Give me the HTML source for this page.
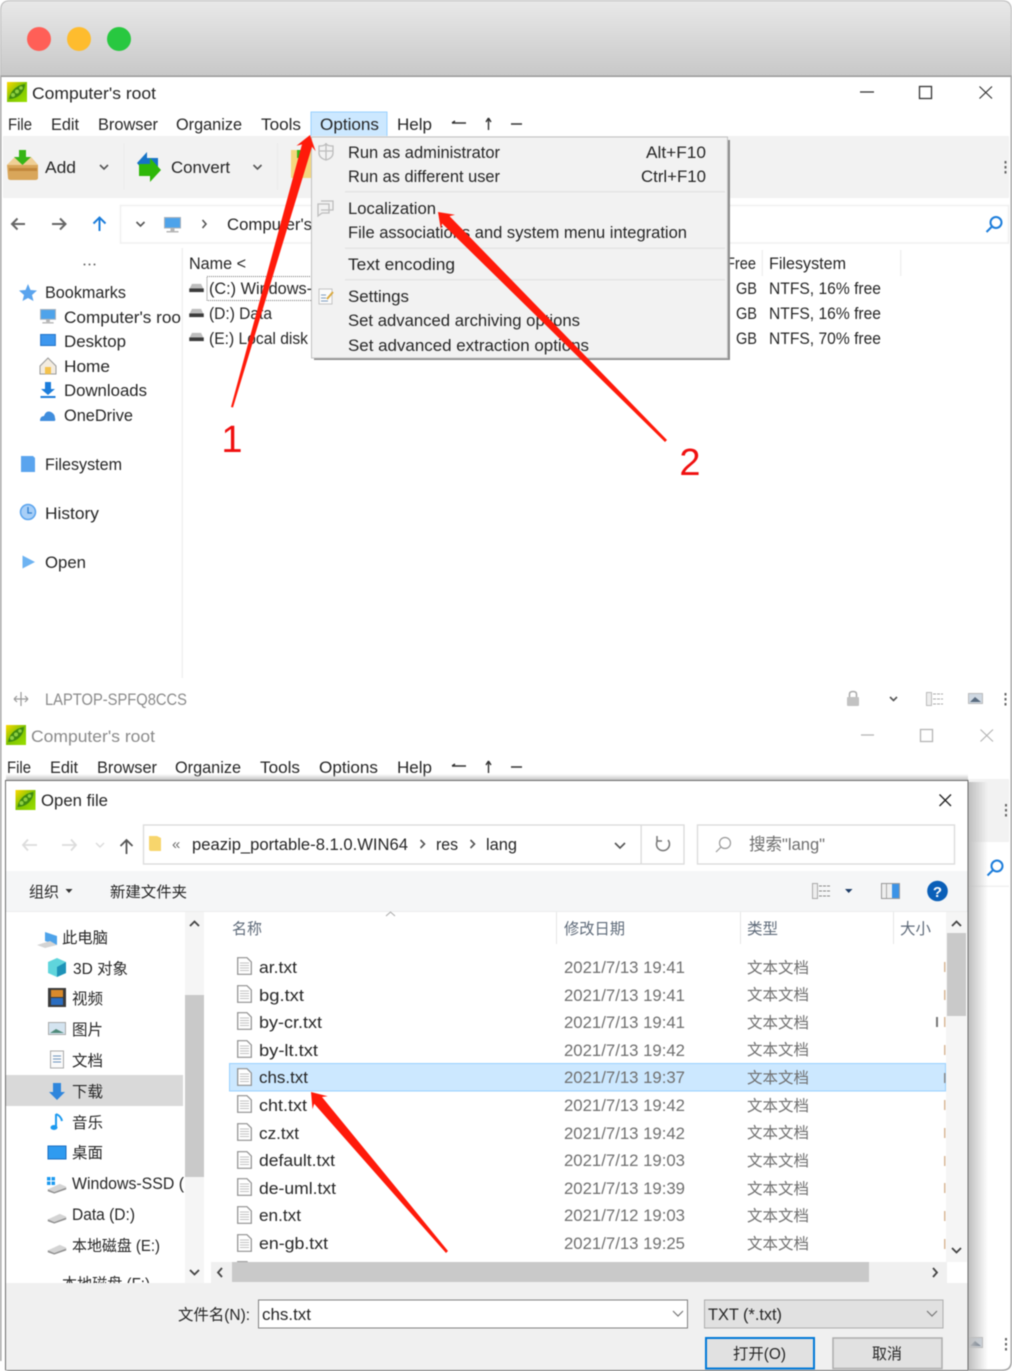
<!DOCTYPE html>
<html lang="en"><head><meta charset="utf-8"><title>PeaZip</title>
<style>
html,body{margin:0;padding:0;background:#fff;width:1012px;height:1371px;overflow:hidden}
svg{display:block;filter:blur(.4px)}
text{font-family:"Liberation Sans","Noto Sans CJK SC",sans-serif;font-size:17px;fill:#262626}
.g{fill:#8a8a8a}
.m{fill:#6f6f6f}.h{fill:#5f6b7a}
.ln{fill:none;stroke:#555;stroke-width:1.6}
</style></head><body>
<svg xmlns="http://www.w3.org/2000/svg" width="1012" height="1371" viewBox="0 0 1012 1371">
<defs>
<linearGradient id="tb" x1="0" y1="0" x2="0" y2="1"><stop offset="0" stop-color="#e9e9e9"/><stop offset="1" stop-color="#c8c8c8"/></linearGradient>
<linearGradient id="sh" x1="0" y1="0" x2="1" y2="0"><stop offset="0" stop-color="#bdbdbd"/><stop offset="1" stop-color="#bdbdbd" stop-opacity="0"/></linearGradient>
<linearGradient id="sh2" x1="0" y1="1" x2="0" y2="0"><stop offset="0" stop-color="#c4c4c4"/><stop offset="1" stop-color="#c4c4c4" stop-opacity="0"/></linearGradient>
<linearGradient id="pea" x1="0" y1="0" x2="1" y2="1"><stop offset="0" stop-color="#ffd800"/><stop offset=".5" stop-color="#7fc400"/><stop offset="1" stop-color="#9ae000"/></linearGradient>
<symbol id="logo" viewBox="0 0 20 20" overflow="visible"><rect width="20" height="20" fill="url(#pea)"/><path d="M2 17C3 9 10 3 18 2 18 10 11 17 2 17Z" fill="#3f8a10"/><circle cx="6" cy="13" r="2" fill="#8fd040"/><circle cx="10" cy="9.500" r="2" fill="#8fd040"/><circle cx="14" cy="6" r="1.800" fill="#8fd040"/></symbol>
<symbol id="doc" viewBox="0 0 15 18" overflow="visible"><path d="M.7.7H10L14.300 5V17.300H.7Z" fill="#fff" stroke="#8e8e8e" stroke-width="1.200"/><path d="M3 6H12M3 8.500H12M3 11H12M3 13.500H12" stroke="#c2c2c2"/></symbol>
<symbol id="drive" viewBox="0 0 16 11" overflow="visible"><path d="M3 1H13L15.500 6H.5Z" fill="#bdbdbd"/><rect x="0" y="6" width="16" height="4" fill="#3b3b3b"/></symbol>
<symbol id="drive2" viewBox="0 0 20 12" overflow="visible"><path d="M0 7L13 1 20 4V7L7 11.500 0 9Z" fill="#d4d4d4"/><path d="M0 7L7 10 20 5V7L7 11.500 0 9Z" fill="#8f8f8f"/></symbol>
<symbol id="mon" viewBox="0 0 17 16" overflow="visible"><rect x=".5" y=".5" width="16" height="10.500" fill="#4ea3ea" stroke="#aab2ba"/><rect x="6.500" y="11" width="4" height="3" fill="#b5b5b5"/><rect x="2.500" y="14" width="12" height="1.500" fill="#b5b5b5"/></symbol>
<symbol id="desk" viewBox="0 0 17 13" overflow="visible"><rect x=".5" y=".5" width="16" height="12" fill="#3d97ee" stroke="#1e6fc4"/></symbol>
</defs>

<!-- Frame -->
<rect x="0" y="0" width="1012" height="1371" fill="#fff"/>
<path d="M0 76V10Q0 0 10 0H1002Q1012 0 1012 10V76Z" fill="url(#tb)"/>
<path d="M.7 76V10Q.7 .7 10 .7H1002Q1011.300 .7 1011.300 10V76" fill="none" stroke="#bdbdbd"/>
<rect x="0" y="75.500" width="1012" height="1.500" fill="#9a9a9a"/>
<rect x="0" y="76" width="1.500" height="1285" fill="#a5a5a5"/>
<rect x="1010.500" y="76" width="1.500" height="1285" fill="#a5a5a5"/>
<circle cx="39" cy="39" r="12" fill="#ff5f57"/><circle cx="79" cy="39" r="12" fill="#febc2e"/><circle cx="119" cy="39" r="12" fill="#28c840"/>

<!-- First window -->
<use href="#logo" x="7" y="82" width="20" height="20"/>
<text x="32" y="99" textLength="124" lengthAdjust="spacingAndGlyphs">Computer's root</text>
<path d="M860 92H874" stroke="#333" stroke-width="1.300"/><rect x="919.500" y="86.500" width="12" height="12" fill="none" stroke="#333" stroke-width="1.300"/><path d="M979.500 86.500L992 98.500M992 86.500L979.500 98.500" stroke="#333" stroke-width="1.200"/>
<rect x="311" y="112" width="76" height="24.500" fill="#cce8ff" stroke="#99d1ff"/>
<g>
<text x="8" y="130" textLength="24" lengthAdjust="spacingAndGlyphs">File</text>
<text x="51" y="130" textLength="28" lengthAdjust="spacingAndGlyphs">Edit</text>
<text x="98" y="130" textLength="60" lengthAdjust="spacingAndGlyphs">Browser</text>
<text x="176" y="130" textLength="66" lengthAdjust="spacingAndGlyphs">Organize</text>
<text x="261" y="130" textLength="40" lengthAdjust="spacingAndGlyphs">Tools</text>
<text x="320" y="130" textLength="59" lengthAdjust="spacingAndGlyphs">Options</text>
<text x="397" y="130" textLength="35" lengthAdjust="spacingAndGlyphs">Help</text>
</g>
<path d="M452 123H466M452 123L455 121M488.500 130V118M488.500 118L486 122M488.500 118L491 122M511 124H522" fill="none" stroke="#333" stroke-width="1.400"/>

<!-- toolbar -->
<rect x="3" y="136" width="1006" height="62" fill="#f2f2f2"/>
<rect x="123.500" y="143" width="1" height="47" fill="#ebebeb"/><rect x="277" y="143" width="1" height="47" fill="#ebebeb"/>
<path d="M7 165L15 157H31L38 165V178Q38 180 35 180H11Q8 180 8 178Z" fill="#d9a65a"/><path d="M7 165L15 157H31L38 165Z" fill="#efcf95"/><rect x="9" y="168" width="28" height="3" fill="#c2873b"/><path d="M19 150H26V157H31L22.500 165 14 157H19Z" fill="#35b516"/>
<text x="45" y="173" textLength="31" lengthAdjust="spacingAndGlyphs">Add</text>
<path class="ln" d="M100 165L104 169 108 165M253.500 165L257.500 169 261.500 165"/>
<path d="M137 163L147 152V158H158V170H147V175Z" fill="#1673c7"/><path d="M161 170L150 182V176H139V164H150V158Z" fill="#2fb809"/>
<text x="171" y="173" textLength="59" lengthAdjust="spacingAndGlyphs">Convert</text>
<rect x="291" y="150" width="20" height="28" fill="#f5d77d"/><rect x="297" y="150" width="7" height="8" fill="#35b516"/>
<rect x="1004.500" y="161" width="2" height="2.500" fill="#666"/><rect x="1004.500" y="166" width="2" height="2.500" fill="#666"/><rect x="1004.500" y="171" width="2" height="2.500" fill="#666"/>

<!-- nav -->
<rect x="120.500" y="205.500" width="888" height="37.500" fill="#fff" stroke="#f0f0f0" stroke-width="1.500"/>
<path d="M25 224H12M17.500 218.500L12 224 17.500 229.500M52 224H65.500M60 218.500L65.500 224 60 229.500" fill="none" stroke="#666" stroke-width="2"/>
<path d="M99.500 231V218M93.500 223.500L99.500 217.500 105.500 223.500" fill="none" stroke="#1c7ddb" stroke-width="2"/>
<path class="ln" d="M136.500 222L140.500 226 144.500 222M202.500 220L206 224 202.500 228"/>
<use href="#mon" x="164" y="217" width="17" height="16"/>
<text x="227" y="230" textLength="85" lengthAdjust="spacingAndGlyphs">Computer's</text>
<g fill="none" stroke="#1c7ddb" stroke-width="2"><circle cx="996" cy="222.500" r="5.500"/><path d="M991.500 227L986.500 232"/></g>

<!-- sidebar -->
<rect x="181.500" y="248" width="1.500" height="430" fill="#f0f0f0"/>
<circle cx="84.500" cy="264.500" r="1" fill="#666"/><circle cx="89.500" cy="264.500" r="1" fill="#666"/><circle cx="94.500" cy="264.500" r="1" fill="#666"/>
<path d="M28 284L30.500 290 37 290.500 32 295 33.500 301 28 298 22.500 301 24 295 19 290.500 25.500 290Z" fill="#5aa4ee"/>
<text x="45" y="298" textLength="81" lengthAdjust="spacingAndGlyphs">Bookmarks</text>
<use href="#mon" x="40" y="309" width="16" height="15"/>
<text x="64" y="323" textLength="117" lengthAdjust="spacingAndGlyphs">Computer's roo</text>
<use href="#desk" x="40" y="334" width="16" height="12"/>
<text x="64" y="347" textLength="62" lengthAdjust="spacingAndGlyphs">Desktop</text>
<path d="M40 366L48 358 56 366V374H40Z" fill="#f3ece0" stroke="#9a9a9a"/><rect x="45" y="367" width="6" height="7" fill="#f4c24c"/>
<text x="64" y="372" textLength="46" lengthAdjust="spacingAndGlyphs">Home</text>
<path d="M45 382H51V389H55L48 395 41 389H45Z" fill="#1c7ddb"/><rect x="40.500" y="396" width="15" height="2" fill="#1c7ddb"/>
<text x="64" y="396" textLength="83" lengthAdjust="spacingAndGlyphs">Downloads</text>
<path d="M40 421Q40 416 44 416 46 410 51 412 55 414 55 418 56 421 54 421Z" fill="#3f8ddd"/>
<text x="64" y="421" textLength="69" lengthAdjust="spacingAndGlyphs">OneDrive</text>
<path d="M21 456H33L35 458V472H21Z" fill="#5aa4ee"/>
<text x="45" y="470" textLength="77" lengthAdjust="spacingAndGlyphs">Filesystem</text>
<circle cx="28" cy="512" r="7.500" fill="#a8cff7" stroke="#5aa4ee" stroke-width="1.500"/><path d="M28 507V513H32" fill="none" stroke="#2f7fd0" stroke-width="1.300"/>
<text x="45" y="519" textLength="54" lengthAdjust="spacingAndGlyphs">History</text>
<path d="M22.500 555.500L35 562 22.500 568.500Z" fill="#6db3f2"/>
<text x="45" y="568" textLength="41" lengthAdjust="spacingAndGlyphs">Open</text>

<!-- file list -->
<text x="189" y="269" textLength="57" lengthAdjust="spacingAndGlyphs">Name &lt;</text>
<rect x="761.500" y="250" width="1.500" height="26" fill="#f0f0f0"/><rect x="900" y="250" width="1.500" height="26" fill="#f0f0f0"/>
<text x="726" y="269" textLength="30" lengthAdjust="spacingAndGlyphs">Free</text>
<text x="769" y="269" textLength="77" lengthAdjust="spacingAndGlyphs">Filesystem</text>
<rect x="207" y="276.500" width="105" height="24" fill="none" stroke="#777" stroke-dasharray="1 1"/>
<use href="#drive" x="188.500" y="283" width="16" height="10"/><use href="#drive" x="188.500" y="308" width="16" height="10"/><use href="#drive" x="188.500" y="332" width="16" height="10"/>
<text x="209" y="294" textLength="103" lengthAdjust="spacingAndGlyphs">(C:) Windows-</text>
<text x="209" y="319" textLength="63" lengthAdjust="spacingAndGlyphs">(D:) Data</text>
<text x="209" y="344" textLength="99" lengthAdjust="spacingAndGlyphs">(E:) Local disk</text>
<text x="736" y="294" textLength="21" lengthAdjust="spacingAndGlyphs">GB</text><text x="736" y="319" textLength="21" lengthAdjust="spacingAndGlyphs">GB</text><text x="736" y="344" textLength="21" lengthAdjust="spacingAndGlyphs">GB</text>
<text x="769" y="294" textLength="112" lengthAdjust="spacingAndGlyphs">NTFS, 16% free</text>
<text x="769" y="319" textLength="112" lengthAdjust="spacingAndGlyphs">NTFS, 16% free</text>
<text x="769" y="344" textLength="112" lengthAdjust="spacingAndGlyphs">NTFS, 70% free</text>

<!-- dropdown menu -->
<rect x="314" y="140" width="416" height="220" fill="#8e8e8e"/>
<rect x="311.500" y="137" width="416" height="221" fill="#f2f2f2" stroke="#c2c2c2"/>
<rect x="345" y="191" width="380" height="1.500" fill="#e4e4e4"/><rect x="345" y="247.500" width="380" height="1.500" fill="#e4e4e4"/><rect x="345" y="279" width="380" height="1.500" fill="#e4e4e4"/>
<g fill="none" stroke="#bdbdbd" stroke-width="1.300"><path d="M319 146Q326 146 326 143 326 146 333 146V153Q333 158 326 160 319 158 319 153ZM326 144V160M319 151H333"/><path d="M321 201H333V210H321M318 204H329V213H322L318 216Z"/></g>
<rect x="319" y="289" width="13" height="15" fill="#fbfbfb" stroke="#c4c4c4"/><path d="M321 295H326M321 298H326M321 301H328" stroke="#7f9fc0"/><path d="M327 299L333 292" stroke="#d9a93f" stroke-width="2"/>
<text x="348" y="158" textLength="152" lengthAdjust="spacingAndGlyphs">Run as administrator</text>
<text x="348" y="182" textLength="152" lengthAdjust="spacingAndGlyphs">Run as different user</text>
<text x="646" y="158" textLength="60" lengthAdjust="spacingAndGlyphs">Alt+F10</text>
<text x="641" y="182" textLength="65" lengthAdjust="spacingAndGlyphs">Ctrl+F10</text>
<text x="348" y="214" textLength="88" lengthAdjust="spacingAndGlyphs">Localization</text>
<text x="348" y="238" textLength="339" lengthAdjust="spacingAndGlyphs">File associations and system menu integration</text>
<text x="348" y="270" textLength="107" lengthAdjust="spacingAndGlyphs">Text encoding</text>
<text x="348" y="302" textLength="61" lengthAdjust="spacingAndGlyphs">Settings</text>
<text x="348" y="326" textLength="232" lengthAdjust="spacingAndGlyphs">Set advanced archiving options</text>
<text x="348" y="351" textLength="241" lengthAdjust="spacingAndGlyphs">Set advanced extraction options</text>

<!-- status bar -->
<path d="M21 692V706M14 699H28M14 699L17 696M14 699L17 702M28 699L25 696M28 699L25 702" fill="none" stroke="#999" stroke-width="1.200"/>
<text x="45" y="705" class="g" textLength="142" lengthAdjust="spacingAndGlyphs">LAPTOP-SPFQ8CCS</text>
<rect x="847" y="697" width="12" height="9" rx="1" fill="#c2c2c2"/><path d="M849.500 697V694Q849.500 691.500 853 691.500 856.500 691.500 856.500 694V697" fill="none" stroke="#aaa" stroke-width="1.500"/>
<path class="ln" d="M890 697L893.500 700.500 897 697"/>
<rect x="926.500" y="692.500" width="5" height="13" fill="#eee" stroke="#bbb"/><path d="M933 694H943M933 699H943M933 704H943" stroke="#aaa" stroke-dasharray="3 1"/>
<rect x="968.500" y="693.500" width="14" height="10" fill="#cfd8e2" stroke="#bbb"/><path d="M970 702L975 697 981 702Z" fill="#5a6c80"/>
<rect x="1004.500" y="693" width="2" height="2.500" fill="#666"/><rect x="1004.500" y="698" width="2" height="2.500" fill="#666"/><rect x="1004.500" y="703" width="2" height="2.500" fill="#666"/>

<!-- second window -->
<use href="#logo" x="6" y="725" width="20" height="20"/>
<text x="31" y="742" class="g" textLength="124" lengthAdjust="spacingAndGlyphs">Computer's root</text>
<path d="M861 735H874" stroke="#b5b5b5" stroke-width="1.300"/><rect x="920.500" y="729.500" width="12" height="12" fill="none" stroke="#b5b5b5" stroke-width="1.300"/><path d="M980.500 729.500L993 741.500M993 729.500L980.500 741.500" stroke="#b5b5b5" stroke-width="1.200"/>
<text x="7" y="773" textLength="24" lengthAdjust="spacingAndGlyphs">File</text>
<text x="50" y="773" textLength="28" lengthAdjust="spacingAndGlyphs">Edit</text>
<text x="97" y="773" textLength="60" lengthAdjust="spacingAndGlyphs">Browser</text>
<text x="175" y="773" textLength="66" lengthAdjust="spacingAndGlyphs">Organize</text>
<text x="260" y="773" textLength="40" lengthAdjust="spacingAndGlyphs">Tools</text>
<text x="319" y="773" textLength="59" lengthAdjust="spacingAndGlyphs">Options</text>
<text x="397" y="773" textLength="35" lengthAdjust="spacingAndGlyphs">Help</text>
<path d="M452 766H466M452 766L455 764M488.500 773V761M488.500 761L486 765M488.500 761L491 765M511 767H522" fill="none" stroke="#333" stroke-width="1.400"/>
<rect x="968" y="779" width="41" height="63" fill="#f2f2f2"/>
<rect x="968" y="848" width="41" height="38" fill="#fff"/><rect x="968" y="885.500" width="41" height="1.500" fill="#f0f0f0"/>
<g fill="none" stroke="#1c7ddb" stroke-width="2"><circle cx="997" cy="866" r="5.500"/><path d="M992.500 870.500L987.500 875.500"/></g>
<rect x="1005" y="804" width="2" height="2.500" fill="#666"/><rect x="1005" y="809" width="2" height="2.500" fill="#666"/><rect x="1005" y="814" width="2" height="2.500" fill="#666"/>
<rect x="968.500" y="1337.500" width="14" height="10" fill="#cfd8e2" stroke="#bbb"/><path d="M970 1346L975 1341 981 1346Z" fill="#5a6c80"/>
<rect x="1005" y="1338" width="2" height="2.500" fill="#666"/><rect x="1005" y="1343" width="2" height="2.500" fill="#666"/><rect x="1005" y="1348" width="2" height="2.500" fill="#666"/>
<rect x="968" y="782" width="20" height="588" fill="url(#sh)"/>
<rect x="6" y="774" width="962" height="6" fill="url(#sh2)"/>

<!-- dialog -->
<rect x="5.500" y="780.500" width="962.500" height="590" fill="#fff" stroke="#6b6b6b"/>
<use href="#logo" x="15" y="790" width="21" height="20"/>
<text x="41" y="806" textLength="67" lengthAdjust="spacingAndGlyphs">Open file</text>
<path d="M939.500 794.500L951 806M951 794.500L939.500 806" stroke="#222" stroke-width="1.300"/>
<path d="M37 845H23M28 839.500L23 845 28 850.500M62 845H76M71 839.500L76 845 71 850.500" fill="none" stroke="#dcdcdc" stroke-width="1.800"/>
<path d="M96 843L100 847 104 843" fill="none" stroke="#dcdcdc" stroke-width="1.500"/>
<path d="M126.500 854V841M120.500 846L126.500 840 132.500 846" fill="none" stroke="#555" stroke-width="1.800"/>
<rect x="143.500" y="825" width="540.500" height="39" fill="#fff" stroke="#dadada" stroke-width="1.300"/><rect x="640.500" y="825" width="1.300" height="39" fill="#dadada"/>
<path d="M149 836H157L161 838V851H151Q149 851 149 849Z" fill="#f7d56c"/>
<text x="172" y="849" class="m" style="font-size:15px">«</text>
<text x="192" y="850" textLength="216" lengthAdjust="spacingAndGlyphs">peazip_portable-8.1.0.WIN64</text>
<path class="ln" d="M420.500 840L424.500 844 420.500 848M470.500 840L474.500 844 470.500 848"/>
<text x="436" y="850" textLength="22" lengthAdjust="spacingAndGlyphs">res</text>
<text x="486" y="850" textLength="31" lengthAdjust="spacingAndGlyphs">lang</text>
<path class="ln" d="M615 843L620 848 625 843"/>
<path d="M668 840A6.500 6.500 0 1 1 658 840M657 836V841H662" fill="none" stroke="#777" stroke-width="1.500"/>
<rect x="697.500" y="825" width="257" height="39" fill="#fff" stroke="#dadada" stroke-width="1.300"/>
<g fill="none" stroke="#999" stroke-width="1.200"><circle cx="725" cy="843" r="5.500"/><path d="M721 847L716 852"/></g>
<text x="749" y="850" class="m" textLength="76" lengthAdjust="spacingAndGlyphs">搜索"lang"</text>
<rect x="6" y="871" width="961.500" height="40" fill="#f5f6f7"/><rect x="6" y="911" width="961.500" height="1" fill="#eceded"/>
<text x="29" y="897" style="font-size:15px" fill="#444" textLength="30" lengthAdjust="spacingAndGlyphs">组织</text>
<path d="M65.500 889H72.500L69 893Z" fill="#333"/>
<text x="110" y="897" style="font-size:15px" textLength="77" lengthAdjust="spacingAndGlyphs">新建文件夹</text>
<rect x="812.500" y="883.500" width="5" height="15" fill="#eee" stroke="#aaa"/><path d="M819 886H831M819 891H831M819 896H831" stroke="#888" stroke-dasharray="3 1"/>
<path d="M845 889H852.500L848.700 893Z" fill="#1d3c66"/>
<rect x="881.500" y="883.500" width="18" height="15" fill="#eee" stroke="#999"/><rect x="892" y="884" width="7" height="14" fill="#3c93e6"/><rect x="886" y="884" width="1" height="14" fill="#aaa"/>
<circle cx="937.500" cy="891" r="10.300" fill="#0a5fb8"/><text x="937.500" y="897" text-anchor="middle" style="font-size:15px;font-weight:bold;fill:#fff">?</text>

<!-- tree -->
<rect x="6" y="1075" width="177" height="31" fill="#d9d9d9"/>
<path d="M45 932L57 936V945L45 941Z" fill="#4ea3ea"/><path d="M37 945L50 941 57 945 45 948Z" fill="#d4d4d4"/>
<text x="62" y="943" style="font-size:15.500px" textLength="46" lengthAdjust="spacingAndGlyphs">此电脑</text>
<path d="M48 962L57 958 66 962V973L57 977 48 973Z" fill="#5fd5dc"/><path d="M57 967V977L66 973V962Z" fill="#1e93b8"/>
<text x="73" y="974" style="font-size:15.500px" textLength="55" lengthAdjust="spacingAndGlyphs">3D 对象</text>
<rect x="48" y="988" width="18" height="19" fill="#3b3b3b"/><rect x="51" y="990" width="12" height="7" fill="#d98a2b"/><rect x="51" y="998" width="12" height="7" fill="#2a6dc0"/>
<text x="72" y="1004" style="font-size:15.500px" textLength="31" lengthAdjust="spacingAndGlyphs">视频</text>
<rect x="48.500" y="1022.500" width="17" height="12" fill="#d4e4f0" stroke="#aaa"/><path d="M50 1033L56 1029 64 1033Z" fill="#4f8a7a"/>
<text x="72" y="1035" style="font-size:15.500px" textLength="31" lengthAdjust="spacingAndGlyphs">图片</text>
<rect x="50.500" y="1051" width="13" height="17" fill="#fafafa" stroke="#aaa"/><path d="M53 1056H61M53 1059H61M53 1062H61" stroke="#6c93bd"/>
<text x="72" y="1066" style="font-size:15.500px" textLength="31" lengthAdjust="spacingAndGlyphs">文档</text>
<path d="M53 1083H61V1092H65L57 1100 49 1092H53Z" fill="#2f86dc"/>
<text x="72" y="1097" style="font-size:15.500px" textLength="31" lengthAdjust="spacingAndGlyphs">下载</text>
<path d="M56 1114V1127" stroke="#1c9af0" stroke-width="2"/><ellipse cx="54" cy="1127.500" rx="3.500" ry="2.500" fill="#1c9af0"/><path d="M56 1114Q61 1116 62 1121" fill="none" stroke="#1c9af0" stroke-width="2"/>
<text x="72" y="1128" style="font-size:15.500px" textLength="31" lengthAdjust="spacingAndGlyphs">音乐</text>
<rect x="48" y="1146" width="18" height="13" fill="#2f9bf0" stroke="#1c6ec0"/>
<text x="72" y="1158" style="font-size:15.500px" textLength="31" lengthAdjust="spacingAndGlyphs">桌面</text>
<rect x="47" y="1177" width="3.500" height="3.500" fill="#1c9af0"/><rect x="51.500" y="1177" width="3.500" height="3.500" fill="#1c9af0"/><rect x="47" y="1181.500" width="3.500" height="3.500" fill="#1c9af0"/><rect x="51.500" y="1181.500" width="3.500" height="3.500" fill="#1c9af0"/>
<use href="#drive2" x="47" y="1183" width="20" height="11"/>
<text x="72" y="1189" textLength="112" lengthAdjust="spacingAndGlyphs">Windows-SSD (</text>
<use href="#drive2" x="47" y="1213" width="20" height="11"/>
<text x="72" y="1220" textLength="63" lengthAdjust="spacingAndGlyphs">Data (D:)</text>
<use href="#drive2" x="47" y="1244" width="20" height="11"/>
<text x="72" y="1251" style="font-size:15.500px" textLength="88" lengthAdjust="spacingAndGlyphs">本地磁盘 (E:)</text>
<text x="62" y="1289" style="font-size:15.500px" textLength="88" lengthAdjust="spacingAndGlyphs">本地磁盘 (F:)</text>
<rect x="185" y="912" width="19" height="372" fill="#f5f5f5"/>
<rect x="185" y="995" width="19" height="182" fill="#c9c9c9"/>
<path d="M190 926L194.500 921.500 199 926M190 1270L194.500 1274.500 199 1270" fill="none" stroke="#444" stroke-width="1.800"/>

<!-- list header -->
<text x="232" y="934" class="h" style="font-size:15.500px" textLength="30" lengthAdjust="spacingAndGlyphs">名称</text>
<text x="564" y="934" class="h" style="font-size:15.500px" textLength="61" lengthAdjust="spacingAndGlyphs">修改日期</text>
<text x="747" y="934" class="h" style="font-size:15.500px" textLength="31" lengthAdjust="spacingAndGlyphs">类型</text>
<text x="900" y="934" class="h" style="font-size:15.500px" textLength="31" lengthAdjust="spacingAndGlyphs">大小</text>
<path d="M386 916L390.500 912 395 916" fill="none" stroke="#aaa"/>
<rect x="556" y="912" width="1" height="32" fill="#e5e5e5"/><rect x="740" y="912" width="1" height="32" fill="#e5e5e5"/><rect x="893" y="912" width="1" height="32" fill="#e5e5e5"/>

<!-- rows -->
<rect x="229.500" y="1063.500" width="716" height="27.500" fill="#cce8ff" stroke="#99d1ff"/>
<g>
<use href="#doc" x="237" y="957" width="15" height="18"/><use href="#doc" x="237" y="985" width="15" height="18"/><use href="#doc" x="237" y="1012" width="15" height="18"/><use href="#doc" x="237" y="1040" width="15" height="18"/><use href="#doc" x="237" y="1068" width="15" height="18"/><use href="#doc" x="237" y="1095" width="15" height="18"/><use href="#doc" x="237" y="1123" width="15" height="18"/><use href="#doc" x="237" y="1151" width="15" height="18"/><use href="#doc" x="237" y="1178" width="15" height="18"/><use href="#doc" x="237" y="1206" width="15" height="18"/><use href="#doc" x="237" y="1234" width="15" height="18"/>
<text x="259" y="973" textLength="38" lengthAdjust="spacingAndGlyphs">ar.txt</text>
<text x="259" y="1001" textLength="45" lengthAdjust="spacingAndGlyphs">bg.txt</text>
<text x="259" y="1028" textLength="63" lengthAdjust="spacingAndGlyphs">by-cr.txt</text>
<text x="259" y="1056" textLength="59" lengthAdjust="spacingAndGlyphs">by-lt.txt</text>
<text x="259" y="1083" textLength="49" lengthAdjust="spacingAndGlyphs">chs.txt</text>
<text x="259" y="1111" textLength="48" lengthAdjust="spacingAndGlyphs">cht.txt</text>
<text x="259" y="1139" textLength="40" lengthAdjust="spacingAndGlyphs">cz.txt</text>
<text x="259" y="1166" textLength="76" lengthAdjust="spacingAndGlyphs">default.txt</text>
<text x="259" y="1194" textLength="77" lengthAdjust="spacingAndGlyphs">de-uml.txt</text>
<text x="259" y="1221" textLength="42" lengthAdjust="spacingAndGlyphs">en.txt</text>
<text x="259" y="1249" textLength="69" lengthAdjust="spacingAndGlyphs">en-gb.txt</text>
</g>
<g class="m">
<text class="m" x="564" y="973" textLength="121" lengthAdjust="spacingAndGlyphs">2021/7/13 19:41</text>
<text class="m" x="564" y="1001" textLength="121" lengthAdjust="spacingAndGlyphs">2021/7/13 19:41</text>
<text class="m" x="564" y="1028" textLength="121" lengthAdjust="spacingAndGlyphs">2021/7/13 19:41</text>
<text class="m" x="564" y="1056" textLength="121" lengthAdjust="spacingAndGlyphs">2021/7/13 19:42</text>
<text class="m" x="564" y="1083" textLength="121" lengthAdjust="spacingAndGlyphs">2021/7/13 19:37</text>
<text class="m" x="564" y="1111" textLength="121" lengthAdjust="spacingAndGlyphs">2021/7/13 19:42</text>
<text class="m" x="564" y="1139" textLength="121" lengthAdjust="spacingAndGlyphs">2021/7/13 19:42</text>
<text class="m" x="564" y="1166" textLength="121" lengthAdjust="spacingAndGlyphs">2021/7/12 19:03</text>
<text class="m" x="564" y="1194" textLength="121" lengthAdjust="spacingAndGlyphs">2021/7/13 19:39</text>
<text class="m" x="564" y="1221" textLength="121" lengthAdjust="spacingAndGlyphs">2021/7/12 19:03</text>
<text class="m" x="564" y="1249" textLength="121" lengthAdjust="spacingAndGlyphs">2021/7/13 19:25</text>
<text class="m" x="747" y="973" style="font-size:15.500px" textLength="62" lengthAdjust="spacingAndGlyphs">文本文档</text>
<text class="m" x="747" y="1000" style="font-size:15.500px" textLength="62" lengthAdjust="spacingAndGlyphs">文本文档</text>
<text class="m" x="747" y="1028" style="font-size:15.500px" textLength="62" lengthAdjust="spacingAndGlyphs">文本文档</text>
<text class="m" x="747" y="1055" style="font-size:15.500px" textLength="62" lengthAdjust="spacingAndGlyphs">文本文档</text>
<text class="m" x="747" y="1083" style="font-size:15.500px" textLength="62" lengthAdjust="spacingAndGlyphs">文本文档</text>
<text class="m" x="747" y="1111" style="font-size:15.500px" textLength="62" lengthAdjust="spacingAndGlyphs">文本文档</text>
<text class="m" x="747" y="1138" style="font-size:15.500px" textLength="62" lengthAdjust="spacingAndGlyphs">文本文档</text>
<text class="m" x="747" y="1166" style="font-size:15.500px" textLength="62" lengthAdjust="spacingAndGlyphs">文本文档</text>
<text class="m" x="747" y="1194" style="font-size:15.500px" textLength="62" lengthAdjust="spacingAndGlyphs">文本文档</text>
<text class="m" x="747" y="1221" style="font-size:15.500px" textLength="62" lengthAdjust="spacingAndGlyphs">文本文档</text>
<text class="m" x="747" y="1249" style="font-size:15.500px" textLength="62" lengthAdjust="spacingAndGlyphs">文本文档</text>
</g>
<g fill="#d9b899"><rect x="944" y="962" width="1.500" height="10"/><rect x="944" y="990" width="1.500" height="10"/><rect x="936" y="1017" width="2" height="10" fill="#777"/><rect x="944" y="1017" width="1.500" height="10"/><rect x="944" y="1045" width="1.500" height="10"/><rect x="944" y="1073" width="1.500" height="10" fill="#8a8a8a"/><rect x="944" y="1100" width="1.500" height="10"/><rect x="944" y="1128" width="1.500" height="10"/><rect x="944" y="1156" width="1.500" height="10"/><rect x="944" y="1183" width="1.500" height="10"/><rect x="944" y="1211" width="1.500" height="10"/><rect x="944" y="1239" width="1.500" height="10"/></g>
<rect x="946" y="912" width="21" height="350" fill="#f5f5f5"/>
<rect x="947" y="933" width="19" height="83" fill="#c9c9c9"/>
<path d="M952 926L956.500 921.500 961 926M952 1248L956.500 1252.500 961 1248" fill="none" stroke="#444" stroke-width="1.800"/>
<use href="#doc" x="237" y="1261" width="15" height="18"/>

<!-- hscroll + footer -->
<rect x="211" y="1262" width="736" height="21" fill="#f0f0f0"/><rect x="232" y="1262" width="637" height="20" fill="#c9c9c9"/>
<path d="M222 1268L218 1272.500 222 1277M933 1268L937 1272.500 933 1277" fill="none" stroke="#444" stroke-width="1.800"/>
<rect x="6" y="1283" width="961.500" height="87" fill="#f0f0f0"/>
<text x="178" y="1320" style="font-size:15.500px" textLength="72" lengthAdjust="spacingAndGlyphs">文件名(N):</text>
<rect x="258.500" y="1300" width="429" height="28" fill="#fff" stroke="#808080"/>
<text x="262" y="1320" textLength="49" lengthAdjust="spacingAndGlyphs">chs.txt</text>
<rect x="704.500" y="1300" width="238.500" height="28" fill="#e1e1e1" stroke="#adadad"/>
<path d="M673 1311L678 1316 683 1311M927 1311L932 1316 937 1311" fill="none" stroke="#777" stroke-width="1.200"/>
<text x="708" y="1320" textLength="74" lengthAdjust="spacingAndGlyphs">TXT (*.txt)</text>
<rect x="706" y="1338" width="108" height="30.500" fill="#e1e1e1" stroke="#0078d7" stroke-width="2"/>
<text x="733" y="1359" style="font-size:15.500px" textLength="53" lengthAdjust="spacingAndGlyphs">打开(O)</text>
<rect x="833" y="1338" width="109" height="30.500" fill="#e1e1e1" stroke="#adadad" stroke-width="1.500"/>
<text x="872" y="1359" style="font-size:15.500px" textLength="30" lengthAdjust="spacingAndGlyphs">取消</text>

<!-- annotations -->
<g fill="#ff1a0a">
<polygon points="310,135 315.700,151.300 312,146.800 233,407.500 231,407 302,144.400 296.500,145.700"/>
<polygon points="438,212 455,214.800 449.500,216.100 667,440 665,442 442.100,223.500 440.800,229"/>
<polygon points="311,1092 327.700,1096.200 322,1097 448,1251 446,1253 314.200,1103.800 312.500,1109.200"/>
</g>
<text x="232" y="452" text-anchor="middle" style="font-size:38px;fill:#f01010">1</text>
<text x="690" y="475" text-anchor="middle" style="font-size:38px;fill:#f01010">2</text>
<path d="M0 1361Q0 1371 10 1371H0Z" fill="#fff"/><path d="M1012 1361Q1012 1371 1002 1371H1012Z" fill="#fff"/>
<path d="M1011.300 1358V1361Q1011.300 1370.300 1002 1370.300H968" fill="none" stroke="#a5a5a5" stroke-width="1.500"/>
</svg>
</body></html>
